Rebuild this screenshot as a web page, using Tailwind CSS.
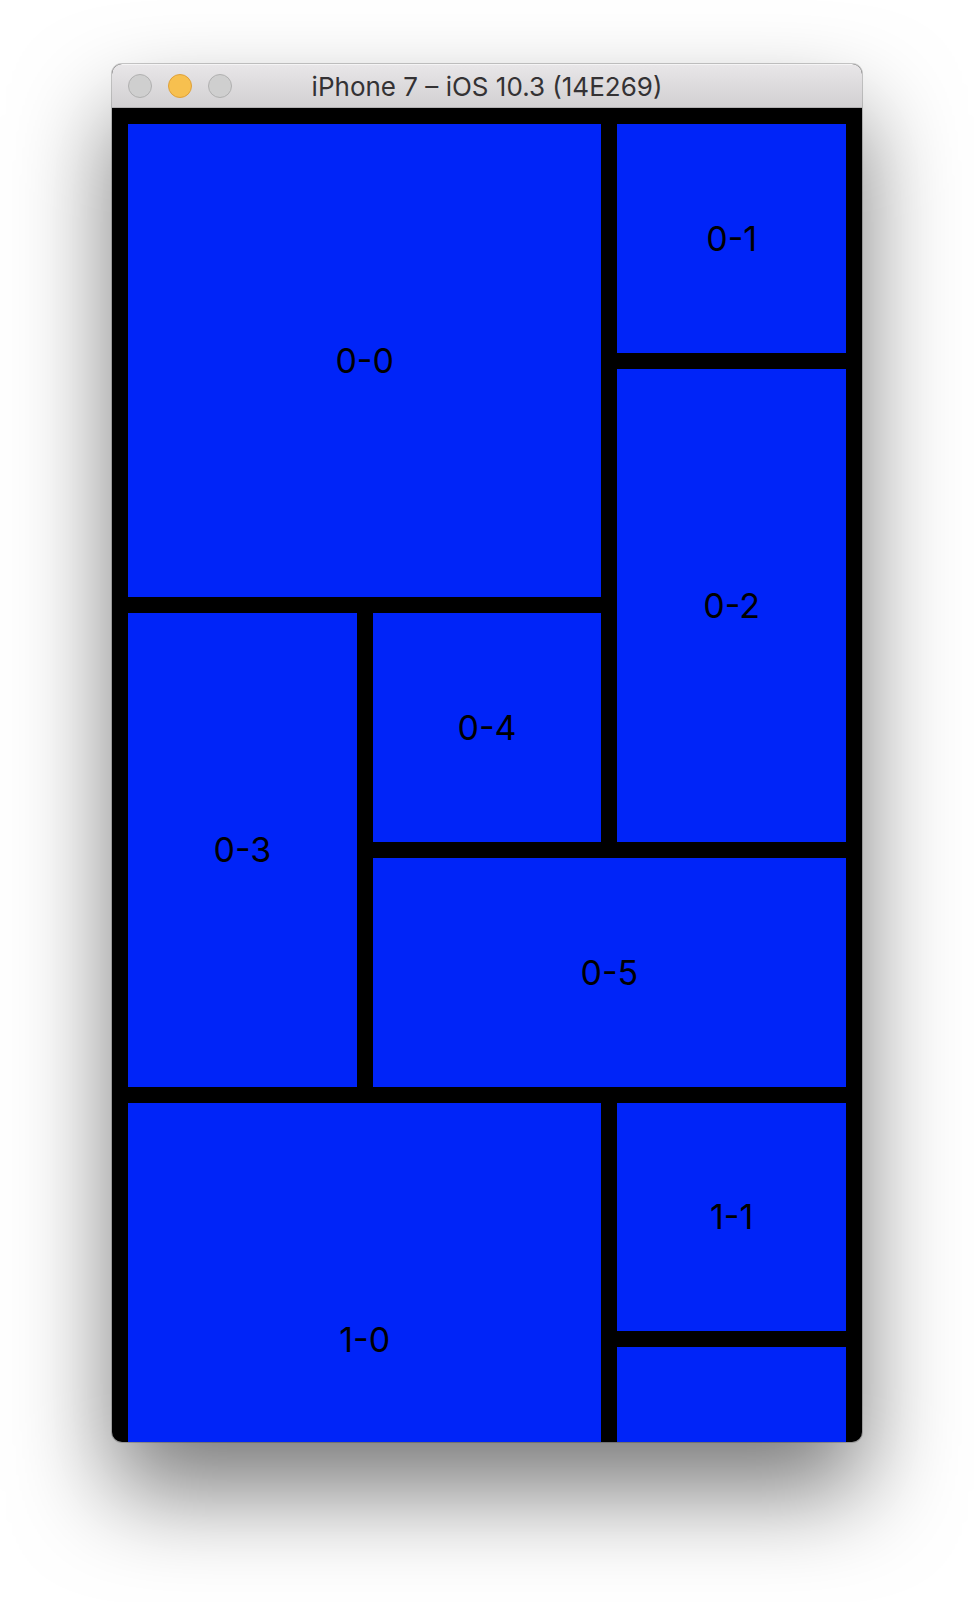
<!DOCTYPE html>
<html lang="en">
<head>
<meta charset="utf-8">
<meta name="viewport" content="width=device-width, initial-scale=1">
<title>iPhone 7 – iOS 10.3 (14E269)</title>
<script src="https://cdn.jsdelivr.net/npm/@tailwindcss/browser@4"></script>
</head>
<body class="bg-white px-28 pt-16 pb-40 font-['Inter','Liberation_Sans',sans-serif]">
<main class="overflow-hidden rounded-[10px] bg-black shadow-[0_0_0_1px_rgba(0,0,0,0.2),0_50px_96px_rgba(0,0,0,0.52)]">
  <header class="grid h-11 grid-cols-[1fr_auto_1fr] items-center border-t border-b border-t-[#f5f4f5] border-b-[#b3b1b3] bg-linear-to-b from-[#e8e6e8] to-[#d2d0d2] px-4">
    <div class="flex gap-4">
      <button type="button" aria-label="Close" class="size-6 rounded-full border border-[#b0b0b0] bg-[#cfcfcf]"></button>
      <button type="button" aria-label="Minimize" class="size-6 rounded-full border border-[#dea03a] bg-[#f7c04f]"></button>
      <button type="button" aria-label="Zoom" class="size-6 rounded-full border border-[#b0b0b0] bg-[#cfcfcf]"></button>
    </div>
    <h1 class="pt-0.5 text-[26px] leading-8 whitespace-nowrap text-[#343234]">iPhone 7 – iOS 10.3 (14E269)</h1>
  </header>
  <section class="aspect-[750/1334] overflow-hidden p-4">
    <div class="grid aspect-[718/1941] grid-cols-3 grid-rows-8 gap-4 text-[34px] leading-10 text-black *:flex *:items-center *:justify-center *:bg-[#0024f8] *:pt-px">
      <div class="col-span-2 row-span-2">0-0</div>
      <div>0-1</div>
      <div class="row-span-2">0-2</div>
      <div class="row-span-2">0-3</div>
      <div>0-4</div>
      <div class="col-span-2">0-5</div>
      <div class="col-span-2 row-span-2">1-0</div>
      <div>1-1</div>
      <div class="row-span-2"></div>
    </div>
  </section>
</main>
</body>
</html>
